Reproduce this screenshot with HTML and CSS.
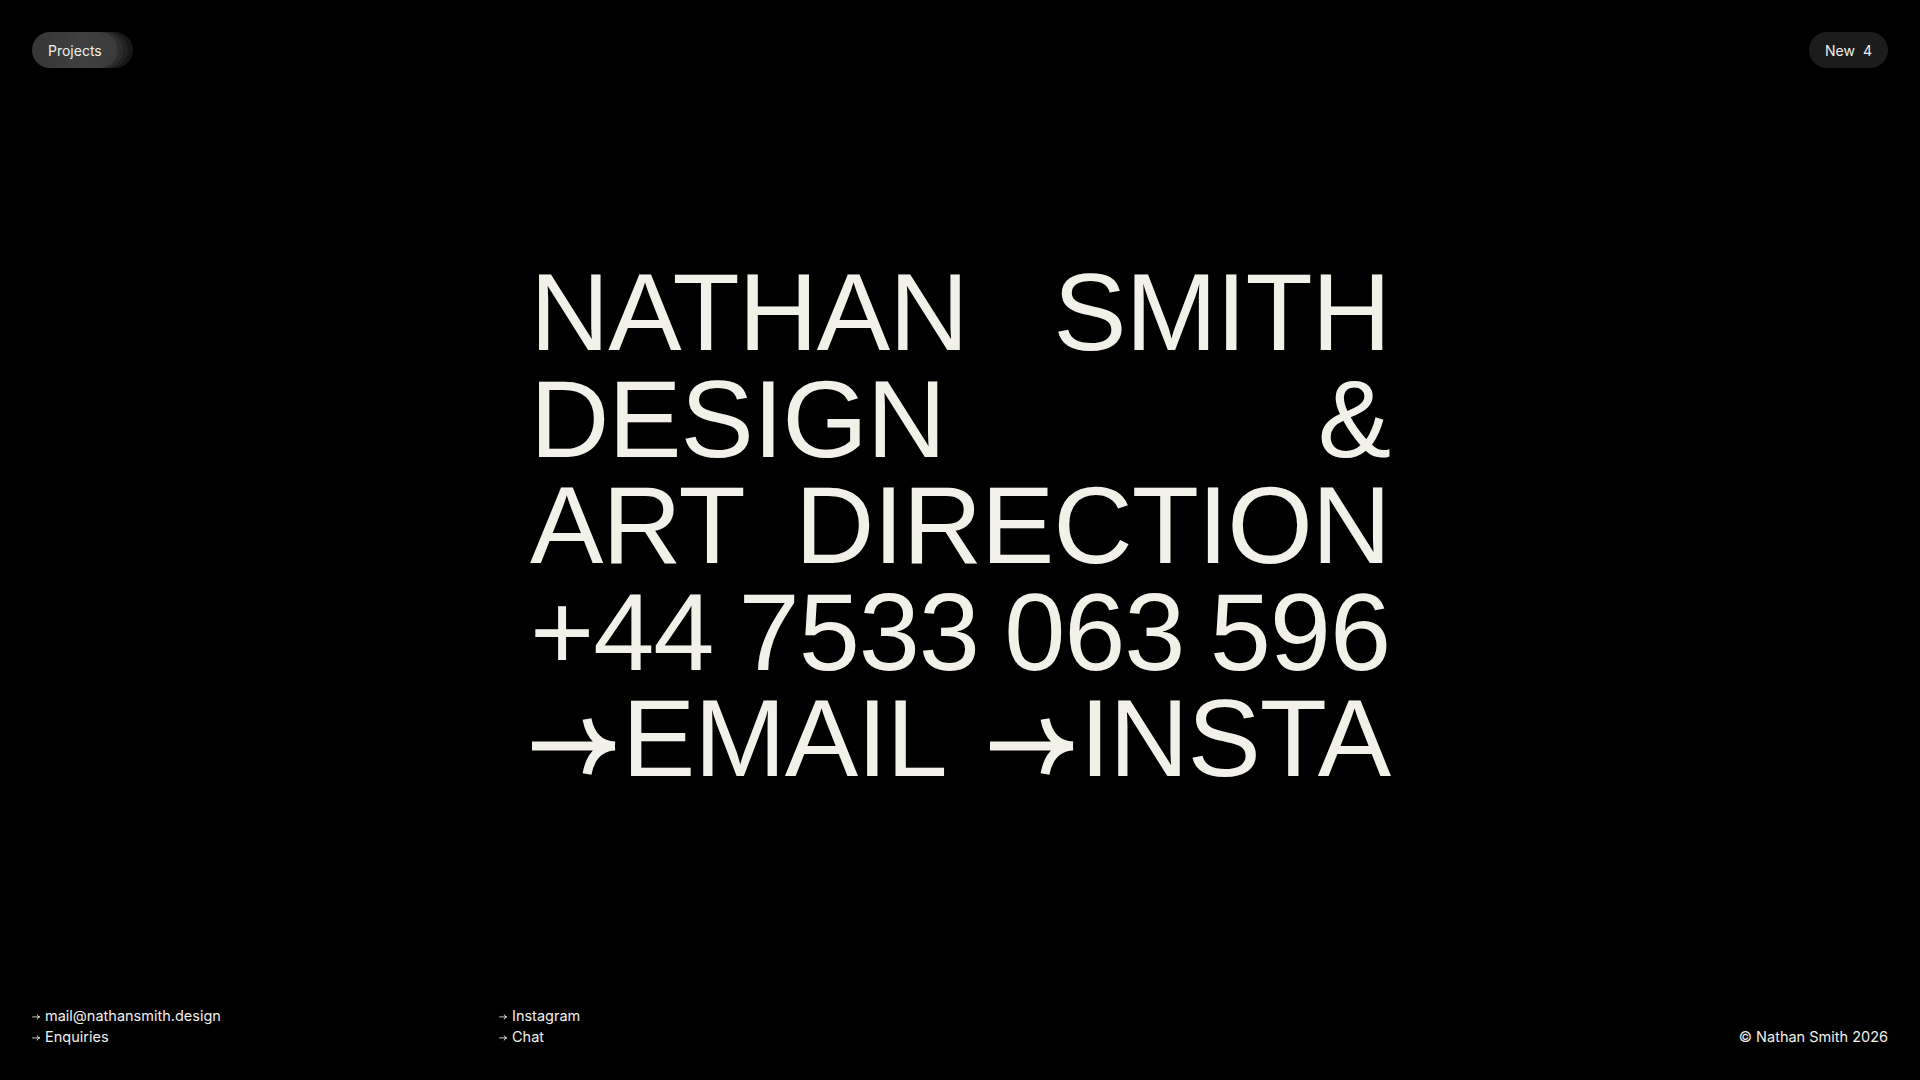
FILE: index.html
```html
<!DOCTYPE html>
<html lang="en">
<head>
    <meta charset="UTF-8">
    <meta name="viewport" content="width=device-width, initial-scale=1.0">
    <title>Nathan Smith</title>
    <link rel="stylesheet" href="styles.css">
</head>
<body>
    <div class="page">
        <!-- Top bar -->
        <header class="topbar">
            <a class="pill pill-stack" href="#">Projects</a>
            <a class="pill" href="#"><span>New</span><span>4</span></a>
        </header>

        <!-- Big type -->
        <main class="hero">
            <div class="hero-text">
                <div class="line"><span>NATHAN</span><span>SMITH</span></div>
                <div class="line"><span>DESIGN</span><span>&amp;</span></div>
                <div class="line"><span>ART</span><span>DIRECTION</span></div>
                <div class="line"><span>+44</span><span>7533</span><span>063</span><span>596</span></div>
                <div class="line">
                    <a class="big-link" href="#">
                        <svg class="big-arrow" viewBox="0 0 88 80" aria-hidden="true">
                            <path d="M2 50 H85 M57 23 Q62 49 85 50 M57 78 Q62 51 85 50" />
                        </svg>EMAIL</a>
                    <a class="big-link" href="#">
                        <svg class="big-arrow" viewBox="0 0 88 80" aria-hidden="true">
                            <path d="M2 50 H85 M57 23 Q62 49 85 50 M57 78 Q62 51 85 50" />
                        </svg>INSTA</a>
                </div>
            </div>
        </main>

        <!-- Footer -->
        <footer class="footer">
            <div class="col">
                <a href="#"><svg class="mini-arrow" viewBox="0 0 88 80"><path d="M2 50 H85 M57 23 Q62 49 85 50 M57 78 Q62 51 85 50" /></svg>mail@nathansmith.design</a>
                <a href="#"><svg class="mini-arrow" viewBox="0 0 88 80"><path d="M2 50 H85 M57 23 Q62 49 85 50 M57 78 Q62 51 85 50" /></svg>Enquiries</a>
            </div>
            <div class="col">
                <a href="#"><svg class="mini-arrow" viewBox="0 0 88 80"><path d="M2 50 H85 M57 23 Q62 49 85 50 M57 78 Q62 51 85 50" /></svg>Instagram</a>
                <a href="#"><svg class="mini-arrow" viewBox="0 0 88 80"><path d="M2 50 H85 M57 23 Q62 49 85 50 M57 78 Q62 51 85 50" /></svg>Chat</a>
            </div>
            <div class="col"></div>
            <div class="col col-right">
                <span>&copy; Nathan Smith 2026</span>
            </div>
        </footer>
    </div>
</body>
</html>
```

FILE: styles.css
```css
/* Base */
* {
    box-sizing: border-box;
}

body {
    margin: 0;
    background: #000;
    color: #f1f0e9;
    font-family: Inter, "Liberation Sans", sans-serif;
}

a {
    color: inherit;
    text-decoration: none;
}

.page {
    height: 100vh;
    display: flex;
    flex-direction: column;
}

/* Top bar */
.topbar {
    display: flex;
    justify-content: space-between;
    align-items: center;
    padding: 32px 32px 0;
}

.pill {
    height: 36px;
    display: inline-flex;
    align-items: center;
    gap: 8px;
    padding: 0 16px;
    border-radius: 18px;
    background: #1c1c1c;
    color: #eeeeea;
    font-size: 14px;
}

/* Projects pill with stacked cards behind it */
.pill-stack {
    background: linear-gradient(to right, #363636, #404040 60%, #3a3a3a);
    box-shadow: 5px 0 0 #2d2d2d, 10px 0 0 #222, 15px 0 0 #171717;
}

/* Big type block */
.hero {
    flex: 1;
    display: flex;
    align-items: center;
    justify-content: center;
    padding-bottom: 22px;
}

.hero-text {
    width: 860px;
    font-family: "Liberation Sans", Arial, sans-serif;
    font-size: 110px;
    line-height: 106.5px;
    letter-spacing: -0.01em;
}

.line {
    display: flex;
    justify-content: space-between;
}

.big-link {
    display: inline-flex;
    align-items: baseline;
}

.big-arrow {
    width: 88px;
    height: 80px;
    margin-right: 4px;
    fill: none;
    stroke: currentColor;
    stroke-width: 9;
}

/* Footer */
.footer {
    display: grid;
    grid-template-columns: repeat(4, 1fr);
    gap: 12px;
    padding: 0 32px 33px;
    font-size: 14.5px;
    line-height: 21px;
}

.col {
    display: flex;
    flex-direction: column;
}

.col a {
    display: flex;
    align-items: center;
}

.col-right {
    justify-content: flex-end;
    align-items: flex-end;
}

.mini-arrow {
    width: 8px;
    height: 8px;
    margin: 1px 5px 0 0;
    fill: none;
    stroke: currentColor;
    stroke-width: 9;
}
```
